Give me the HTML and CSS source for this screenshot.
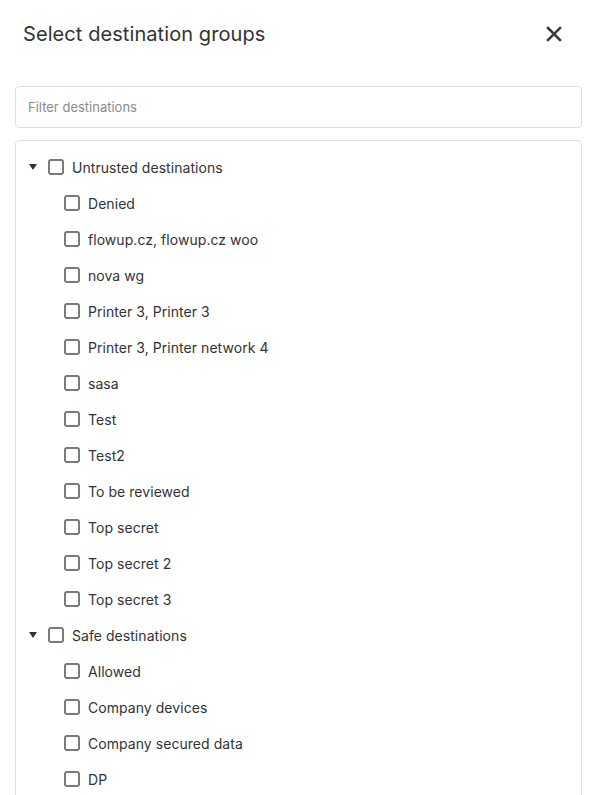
FILE: index.html
```html
<!DOCTYPE html>
<html>
<head>
<meta charset="utf-8">
<link rel="stylesheet" href="styles.css">
</head>
<body>
<div class="dialog">
  <div class="header">
    <h1 class="title">Select destination groups</h1>
    <button class="close" aria-label="Close">
      <svg width="16" height="16" viewBox="0 0 16 16"><path d="M2 2 L14 14 M14 2 L2 14" stroke="#3c3c3c" stroke-width="2.6" stroke-linecap="square"/></svg>
    </button>
  </div>
  <div class="filter"><input class="filter-input" type="text" placeholder="Filter destinations"></div>
  <div class="tree">
    <div class="row group"><span class="caret"></span><span class="cb"></span><span class="label">Untrusted destinations</span></div>
    <div class="row child"><span class="cb"></span><span class="label">Denied</span></div>
    <div class="row child"><span class="cb"></span><span class="label">flowup.cz, flowup.cz woo</span></div>
    <div class="row child"><span class="cb"></span><span class="label">nova wg</span></div>
    <div class="row child"><span class="cb"></span><span class="label">Printer 3, Printer 3</span></div>
    <div class="row child"><span class="cb"></span><span class="label">Printer 3, Printer network 4</span></div>
    <div class="row child"><span class="cb"></span><span class="label">sasa</span></div>
    <div class="row child"><span class="cb"></span><span class="label">Test</span></div>
    <div class="row child"><span class="cb"></span><span class="label">Test2</span></div>
    <div class="row child"><span class="cb"></span><span class="label">To be reviewed</span></div>
    <div class="row child"><span class="cb"></span><span class="label">Top secret</span></div>
    <div class="row child"><span class="cb"></span><span class="label">Top secret 2</span></div>
    <div class="row child"><span class="cb"></span><span class="label">Top secret 3</span></div>
    <div class="row group"><span class="caret"></span><span class="cb"></span><span class="label">Safe destinations</span></div>
    <div class="row child"><span class="cb"></span><span class="label">Allowed</span></div>
    <div class="row child"><span class="cb"></span><span class="label">Company devices</span></div>
    <div class="row child"><span class="cb"></span><span class="label">Company secured data</span></div>
    <div class="row child"><span class="cb"></span><span class="label">DP</span></div>
  </div>
</div>
</body>
</html>
```
FILE: styles.css
```css
html, body {
  margin: 0;
  padding: 0;
  background: #fff;
  overflow: hidden;
}
body {
  font-family: Inter, "Noto Sans", sans-serif;
  color: #333;
}
.dialog {
  padding: 0 14px 0 15px;
}
.header {
  display: flex;
  align-items: center;
  justify-content: space-between;
  height: 68px;
  padding: 0 19px 0 8px;
}
.title {
  margin: 0;
  font-size: 20px;
  font-weight: 400;
  color: #333;
  letter-spacing: 0.08px;
}
.close {
  border: 0;
  background: none;
  padding: 0;
  width: 18px;
  height: 18px;
  display: flex;
  align-items: center;
  justify-content: center;
  cursor: pointer;
}
.filter {
  margin-top: 18px;
}
.filter-input {
  box-sizing: border-box;
  width: 100%;
  height: 42px;
  border: 1px solid #dedede;
  border-radius: 4px;
  padding: 0 12px;
  font-family: Inter, "Noto Sans", sans-serif;
  font-size: 13px;
  color: #333;
  outline: none;
}
.filter-input::placeholder {
  color: #8a8a8a;
}
.tree {
  margin-top: 12px;
  border: 1px solid #e2e2e2;
  border-radius: 4px;
  padding: 8px 0 0 0;
  height: 700px;
}
.row {
  display: flex;
  align-items: center;
  height: 36px;
  font-size: 14px;
  color: #333;
  letter-spacing: 0.05px;
}
.group {
  padding-left: 12px;
}
.child {
  padding-left: 48px;
}
.caret {
  width: 0;
  height: 0;
  border-left: 4px solid transparent;
  border-right: 4px solid transparent;
  border-top: 6px solid #333;
  margin-right: 11px;
  margin-left: 1px;
}
.cb {
  box-sizing: border-box;
  width: 16px;
  height: 16px;
  border: 2px solid #7a7a7a;
  border-radius: 3px;
  margin-right: 8px;
  flex: none;
}
```
